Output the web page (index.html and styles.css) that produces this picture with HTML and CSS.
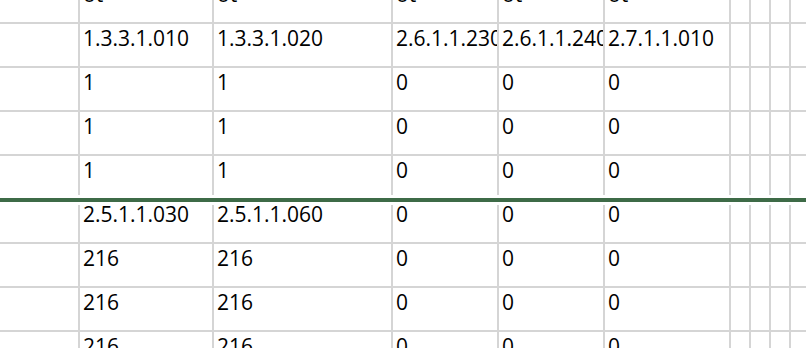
FILE: index.html
```html
<!DOCTYPE html>
<html>
<head>
<meta charset="utf-8">
<link rel="stylesheet" href="styles.css">
</head>
<body>
<div class="sheet">
  <div class="cell"></div><div class="cell">ot</div><div class="cell">ot</div><div class="cell">ot</div><div class="cell">ot</div><div class="cell">ot</div><div class="cell"></div><div class="cell"></div><div class="cell"></div><div class="cell last"></div>

  <div class="cell"></div><div class="cell">1.3.3.1.010</div><div class="cell">1.3.3.1.020</div><div class="cell">2.6.1.1.230</div><div class="cell">2.6.1.1.240</div><div class="cell">2.7.1.1.010</div><div class="cell"></div><div class="cell"></div><div class="cell"></div><div class="cell last"></div>

  <div class="cell"></div><div class="cell">1</div><div class="cell">1</div><div class="cell">0</div><div class="cell">0</div><div class="cell">0</div><div class="cell"></div><div class="cell"></div><div class="cell"></div><div class="cell last"></div>

  <div class="cell"></div><div class="cell">1</div><div class="cell">1</div><div class="cell">0</div><div class="cell">0</div><div class="cell">0</div><div class="cell"></div><div class="cell"></div><div class="cell"></div><div class="cell last"></div>

  <div class="cell"></div><div class="cell">1</div><div class="cell">1</div><div class="cell">0</div><div class="cell">0</div><div class="cell">0</div><div class="cell"></div><div class="cell"></div><div class="cell"></div><div class="cell last"></div>

  <div class="cell frozen"></div><div class="cell">2.5.1.1.030</div><div class="cell">2.5.1.1.060</div><div class="cell">0</div><div class="cell">0</div><div class="cell">0</div><div class="cell"></div><div class="cell"></div><div class="cell"></div><div class="cell last"></div>

  <div class="cell"></div><div class="cell">216</div><div class="cell">216</div><div class="cell">0</div><div class="cell">0</div><div class="cell">0</div><div class="cell"></div><div class="cell"></div><div class="cell"></div><div class="cell last"></div>

  <div class="cell"></div><div class="cell">216</div><div class="cell">216</div><div class="cell">0</div><div class="cell">0</div><div class="cell">0</div><div class="cell"></div><div class="cell"></div><div class="cell"></div><div class="cell last"></div>

  <div class="cell"></div><div class="cell">216</div><div class="cell">216</div><div class="cell">0</div><div class="cell">0</div><div class="cell">0</div><div class="cell"></div><div class="cell"></div><div class="cell"></div><div class="cell last"></div>
</div>
</body>
</html>
```
FILE: styles.css
```css
html, body {
  margin: 0;
  padding: 0;
  background: #ffffff;
  overflow: hidden;
  height: 348px;
}

.sheet {
  position: relative;
  margin-top: -20px;
  display: grid;
  grid-template-columns: 80px 134px 179px 106px 106px 126px 20px 20px 20px 40px;
  grid-auto-rows: 44px;
  font-family: "Open Sans", "Liberation Sans", sans-serif;
  font-size: 21px;
  line-height: 28px;
  color: #000000;
}

.cell {
  box-sizing: border-box;
  border-right: 2px solid #d5d5d5;
  border-bottom: 2px solid #d5d5d5;
  padding: 0 0 0 3px;
  white-space: nowrap;
  overflow: hidden;
}

.cell.last {
  border-right: none;
}

.frozen {
  overflow: visible;
  position: relative;
}

.frozen::before {
  content: "";
  position: absolute;
  left: 0;
  top: -5px;
  width: 806px;
  height: 4px;
  background: #3e6b47;
  border-top: 3px solid #ffffff;
  border-bottom: 3px solid #ffffff;
  z-index: 2;
}
```
